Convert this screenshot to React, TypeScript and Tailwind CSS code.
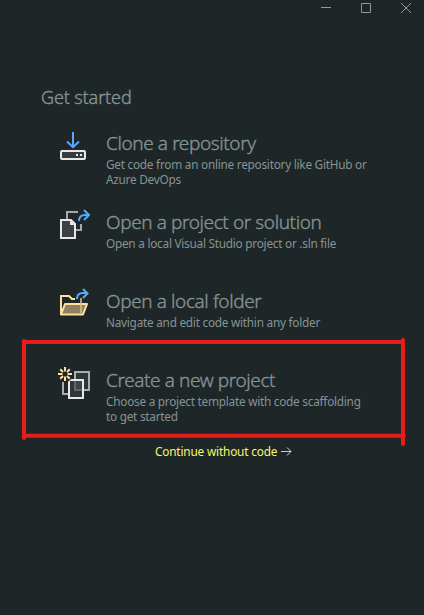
import type { ReactNode } from "react";

function CloneIcon() {
  return (
    <svg width="34" height="34" viewBox="0 0 34 34" fill="none" className="shrink-0">
      <path d="M15 2v15M9 11.5l6 5.7 6-5.7" stroke="#55aaff" strokeWidth="2" />
      <rect x="3" y="21" width="24" height="8" rx="1" fill="#383c3f" stroke="#e8e8e8" strokeWidth="2" />
      <path d="M18 24h2v2h-2zM22 24h2v2h-2z" fill="#e8e8e8" />
    </svg>
  );
}

function OpenProjectIcon() {
  return (
    <svg width="34" height="34" viewBox="0 0 34 34" fill="none" className="shrink-0">
      <path d="M9 10V3h11M17 21h6v-6" stroke="#a6a9ab" strokeWidth="2" />
      <path d="M3 11h10l4 4v14H3z" fill="#3c4042" stroke="#e8e8e8" strokeWidth="2" />
      <path d="M12 11l5 5h-5z" fill="#e8e8e8" />
      <path d="M21 12c0-4 2-6 6-6h3M26 1l5 5-5 5" stroke="#55aaff" strokeWidth="2" />
    </svg>
  );
}

function OpenFolderIcon() {
  return (
    <svg width="34" height="34" viewBox="0 0 34 34" fill="none" className="shrink-0">
      <path d="M3 26V8h8l3 3h3" stroke="#ffe0a0" strokeWidth="2" />
      <path d="M3 26.5L7 16h22l-4 10.5z" fill="#8e815f" stroke="#ffe0a0" strokeWidth="2" strokeLinejoin="round" />
      <path d="M23 10v15" stroke="#d9c294" strokeWidth="1.5" />
      <path d="M19 11c0-4 2-6 6-6h4M25 1l4.5 4.5L25 10" stroke="#55aaff" strokeWidth="2" />
    </svg>
  );
}

function NewProjectIcon() {
  return (
    <svg width="34" height="36" viewBox="0 0 34 36" fill="none" className="shrink-0">
      <rect x="17" y="5" width="14" height="18" fill="#303638" stroke="#a9adae" strokeWidth="2" />
      <path d="M5 15v12h5" stroke="#a9adae" strokeWidth="2" />
      <rect x="11" y="13" width="14" height="18" fill="#303638" stroke="#e8e8e8" strokeWidth="2" />
      <path d="M16 14h8v10h-8z" fill="#606567" />
      <path d="M18 14h6v8h-6z" fill="#3f4547" />
      <circle cx="7" cy="7" r="8" fill="#1f2628" />
      <path d="M7 0v4.5M7 9.5V14M0 7h4.5M9.5 7H14M2.2 2.2L5 5M9 9l2.8 2.8M2.2 11.8L5 9M9 5l2.8-2.8" stroke="#ffe0a0" strokeWidth="2" />
    </svg>
  );
}

function Row({ icon, title, lines }: { icon: ReactNode; title: string; lines: string[] }) {
  return (
    <button className="flex h-[79px] w-full items-start pl-[58px] text-left">
      {icon}
      <span className="block pl-[14px]">
        <span className="block h-[27px] whitespace-nowrap text-[19px] font-light leading-[26px] tracking-[-0.4px] [-webkit-text-stroke:0.35px_currentColor]">{title}</span>
        {lines.map((line) => (
          <span key={line} className="block h-[15px] whitespace-nowrap text-[11.8px] leading-[15px] tracking-[-0.25px]">{line}</span>
        ))}
      </span>
    </button>
  );
}

export default function App() {
  return (
    <div className="relative h-[615px] w-[424px] overflow-hidden bg-[#1f2628] font-['Noto_Sans','Open_Sans',sans-serif] text-[#849494]">
      <header className="flex h-4 justify-end gap-[30px] pr-[13px] pt-[3px] text-[#919b9c]">
        <svg width="10" height="10" fill="none" stroke="currentColor"><path d="M0 4.5h10" /></svg>
        <svg width="10" height="10" fill="none" stroke="currentColor"><path d="M.5.5h9v9h-9z" /></svg>
        <svg width="10" height="10" fill="none" stroke="currentColor"><path d="M0 0l10 10M10 0L0 10" /></svg>
      </header>
      <main className="pt-[68px]">
        <h1 className="h-[46px] pl-[41px] text-[18px] font-light leading-[26px] tracking-[-0.12px] [-webkit-text-stroke:0.35px_currentColor]">Get started</h1>
        <Row icon={<CloneIcon />} title="Clone a repository" lines={["Get code from an online repository like GitHub or", "Azure DevOps"]} />
        <Row icon={<OpenProjectIcon />} title="Open a project or solution" lines={["Open a local Visual Studio project or .sln file"]} />
        <Row icon={<OpenFolderIcon />} title="Open a local folder" lines={["Navigate and edit code within any folder"]} />
        <Row icon={<NewProjectIcon />} title="Create a new project" lines={["Choose a project template with code scaffolding", "to get started"]} />
        <a className="-mt-[4px] flex h-[18px] items-center pl-[155px] text-[11.8px] leading-[16px] text-[#f7f76c]">
          <span className="whitespace-nowrap tracking-[-0.17px]">Continue without code</span>
          <svg className="ml-1 text-[#c9cccc]" width="11" height="10" fill="none" stroke="currentColor"><path d="M0 5.5h10M6 1.5l4 4-4 4" /></svg>
        </a>
      </main>
      <svg className="pointer-events-none absolute inset-0" width="424" height="615" fill="none" stroke="#ea1b1b" strokeWidth="4" strokeLinecap="round">
        <path d="M24 342H403M24 341V438M24 435.7H404M403 340V444" />
      </svg>
    </div>
  );
}
